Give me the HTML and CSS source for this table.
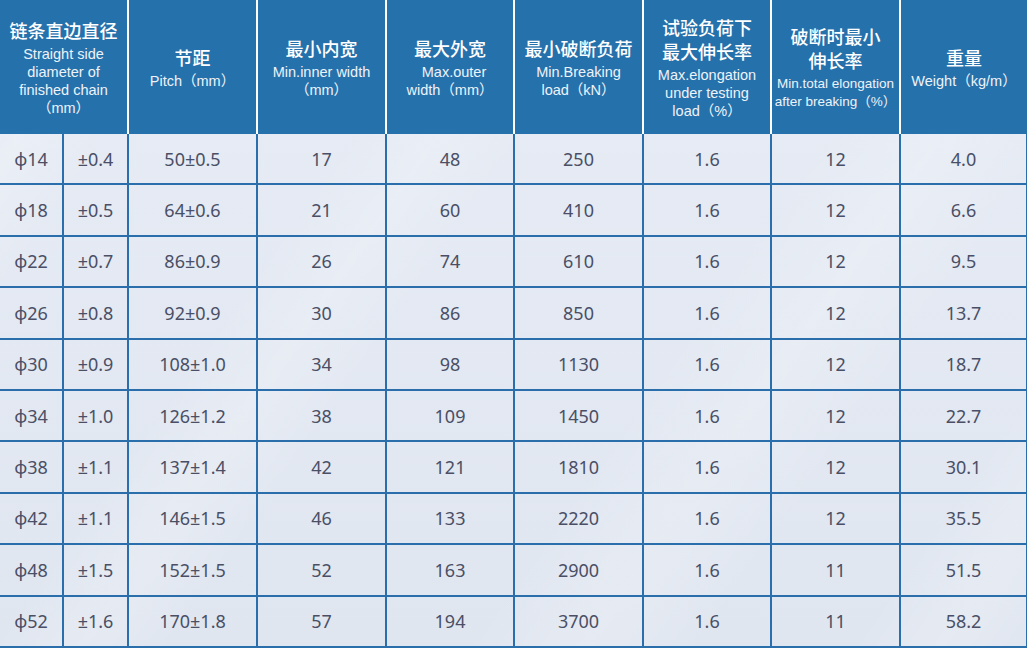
FILE: index.html
```html
<!DOCTYPE html>
<html lang="zh">
<head>
<meta charset="utf-8">
<title>链条规格表</title>
<link rel="stylesheet" href="styles.css">
</head>
<body>
<div class="tbl">
  <div class="th span2"><div class="zh">链条直边直径</div><div class="en">Straight side<br>diameter of<br>finished chain<br>（mm）</div></div>
  <div class="th"><div class="zh">节距</div><div class="en">Pitch（mm）</div></div>
  <div class="th"><div class="zh">最小内宽</div><div class="en">Min.inner width<br>（mm）</div></div>
  <div class="th"><div class="zh">最大外宽</div><div class="en">&nbsp;&nbsp;Max.outer<br>width（mm）</div></div>
  <div class="th"><div class="zh">最小破断负荷</div><div class="en">Min.Breaking<br>load（kN）</div></div>
  <div class="th"><div class="zh">试验负荷下<br>最大伸长率</div><div class="en">Max.elongation<br>under testing<br>load（%）</div></div>
  <div class="th"><div class="zh">破断时最小<br>伸长率</div><div class="en sm">Min.total elongation<br>after breaking（%）</div></div>
  <div class="th last"><div class="zh">重量</div><div class="en">Weight（kg/m）</div></div>

  <div class="td">ϕ14</div><div class="td">±0.4</div><div class="td">50±0.5</div><div class="td">17</div><div class="td">48</div><div class="td">250</div><div class="td">1.6</div><div class="td">12</div><div class="td last">4.0</div>
  <div class="td">ϕ18</div><div class="td">±0.5</div><div class="td">64±0.6</div><div class="td">21</div><div class="td">60</div><div class="td">410</div><div class="td">1.6</div><div class="td">12</div><div class="td last">6.6</div>
  <div class="td">ϕ22</div><div class="td">±0.7</div><div class="td">86±0.9</div><div class="td">26</div><div class="td">74</div><div class="td">610</div><div class="td">1.6</div><div class="td">12</div><div class="td last">9.5</div>
  <div class="td">ϕ26</div><div class="td">±0.8</div><div class="td">92±0.9</div><div class="td">30</div><div class="td">86</div><div class="td">850</div><div class="td">1.6</div><div class="td">12</div><div class="td last">13.7</div>
  <div class="td">ϕ30</div><div class="td">±0.9</div><div class="td">108±1.0</div><div class="td">34</div><div class="td">98</div><div class="td">1130</div><div class="td">1.6</div><div class="td">12</div><div class="td last">18.7</div>
  <div class="td">ϕ34</div><div class="td">±1.0</div><div class="td">126±1.2</div><div class="td">38</div><div class="td">109</div><div class="td">1450</div><div class="td">1.6</div><div class="td">12</div><div class="td last">22.7</div>
  <div class="td">ϕ38</div><div class="td">±1.1</div><div class="td">137±1.4</div><div class="td">42</div><div class="td">121</div><div class="td">1810</div><div class="td">1.6</div><div class="td">12</div><div class="td last">30.1</div>
  <div class="td">ϕ42</div><div class="td">±1.1</div><div class="td">146±1.5</div><div class="td">46</div><div class="td">133</div><div class="td">2220</div><div class="td">1.6</div><div class="td">12</div><div class="td last">35.5</div>
  <div class="td">ϕ48</div><div class="td">±1.5</div><div class="td">152±1.5</div><div class="td">52</div><div class="td">163</div><div class="td">2900</div><div class="td">1.6</div><div class="td">11</div><div class="td last">51.5</div>
  <div class="td">ϕ52</div><div class="td">±1.6</div><div class="td">170±1.8</div><div class="td">57</div><div class="td">194</div><div class="td">3700</div><div class="td">1.6</div><div class="td">11</div><div class="td last">58.2</div>
</div>
</body>
</html>
```
FILE: styles.css
```css
html, body {
  margin: 0;
  padding: 0;
  background: #e6ebf4;
}

.tbl {
  width: 1027px;
  height: 648px;
  display: grid;
  grid-template-columns: 64px 65px 129px 129px 128px 129px 128px 129px 126px;
  grid-template-rows: 134px repeat(10, 1fr);
  background-color: #e4e9f2;
  background-image:
    linear-gradient(125deg, rgba(255,255,255,0) 0%, rgba(255,255,255,0.2) 8%, rgba(255,255,255,0) 14%,
      rgba(255,255,255,0) 30%, rgba(255,255,255,0.18) 36%, rgba(255,255,255,0) 42%,
      rgba(255,255,255,0) 62%, rgba(255,255,255,0.18) 70%, rgba(255,255,255,0) 78%,
      rgba(255,255,255,0) 88%, rgba(255,255,255,0.18) 94%, rgba(255,255,255,0) 100%),
    linear-gradient(180deg, #e7ecf5 0%, #e0e6f0 100%);
  overflow: hidden;
}

.th {
  background: #2571ac;
  border-right: 2px solid #ffffff;
  color: #ffffff;
  display: flex;
  flex-direction: column;
  align-items: center;
  justify-content: center;
  text-align: center;
  box-sizing: border-box;
}

.th.span2 {
  grid-column: span 2;
}

.th.last {
  border-right: none;
}

.zh {
  font-family: "Noto Sans CJK SC", "Liberation Sans", sans-serif;
  font-size: 18px;
  line-height: 24px;
  font-weight: 500;
}

.en {
  font-family: "Liberation Sans", "Noto Sans CJK SC", sans-serif;
  font-size: 14.5px;
  line-height: 18px;
  margin-top: 3px;
  color: #eef3f9;
  white-space: nowrap;
}

.en.sm {
  font-size: 13.5px;
}

.td {
  border-right: 2px solid #2a6fab;
  border-bottom: 2px solid #2a6fab;
  box-sizing: border-box;
  display: flex;
  align-items: center;
  justify-content: center;
  font-family: "Noto Sans", "Noto Sans CJK SC", sans-serif;
  font-size: 18px;
  color: #4a4f66;
}

.td.last {
  border-right: 1px solid #2a6fab;
}
```
